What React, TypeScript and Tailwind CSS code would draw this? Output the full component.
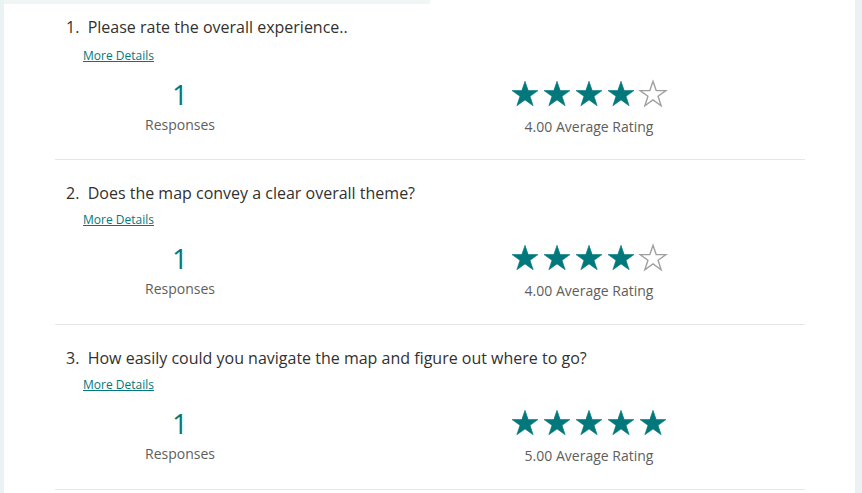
import React from 'react';

type Question = {
  title: string;
  responses: number;
  rating: number;
};

const questions: Question[] = [
  { title: 'Please rate the overall experience..', responses: 1, rating: 4 },
  { title: 'Does the map convey a clear overall theme?', responses: 1, rating: 4 },
  { title: 'How easily could you navigate the map and figure out where to go?', responses: 1, rating: 5 },
];

function Star({ filled }: { filled: boolean }) {
  return (
    <svg width="30" height="30" viewBox="0 0 24 24">
      <path
        d="M12 1.8l2.55 7.45h7.85l-6.35 4.6 2.45 7.55L12 16.7l-6.5 4.7 2.45-7.55L1.6 9.25h7.85z"
        fill={filled ? '#03787c' : 'none'}
        stroke={filled ? '#03787c' : '#a19f9d'}
        strokeWidth={filled ? 0.5 : 1.1}
        strokeLinejoin="miter"
      />
    </svg>
  );
}

function QuestionBlock({ q, index, first }: { q: Question; index: number; first: boolean }) {
  return (
    <div className={`${first ? 'pt-[11px] pb-[22px]' : 'pt-[21px] pb-[23px]'} border-b border-[#e6e6e6]`}>
      <div className="pl-[11px] text-[16px] leading-6 text-[#323130]">
        {index + 1}.&nbsp; {q.title}
      </div>
      <div className={`pl-[28px] text-[12px] leading-4 ${first ? 'mt-[9px]' : 'mt-[7px]'}`}>
        <a href="#" className="text-[#03787c] underline">
          More Details
        </a>
      </div>
      <div className="flex mt-[12px]">
        <div className="w-[250px] flex flex-col items-center">
          <div className="text-[28px] leading-9 text-[#03787c]">{q.responses}</div>
          <div className="text-[14px] leading-5 text-[#605e5c] mt-[3px]">Responses</div>
        </div>
        <div className="ml-[184px] w-[200px] flex flex-col items-center">
          <div className="flex gap-[2px] h-9 items-center">
            {[0, 1, 2, 3, 4].map((i) => (
              <Star key={i} filled={i < q.rating} />
            ))}
          </div>
          <div className="text-[14px] leading-5 text-[#605e5c] mt-[5px]">
            {q.rating.toFixed(2)} Average Rating
          </div>
        </div>
      </div>
    </div>
  );
}

export default function App() {
  return (
    <div
      className="w-[862px] h-[493px] overflow-hidden bg-[#eaf2f3] flex"
      style={{ fontFamily: '"Open Sans", "Noto Sans", sans-serif' }}
    >
      <div className="w-[4px] shrink-0" />
      <div className="w-[851px] flex flex-col">
        <div className="flex h-[4px] shrink-0">
          <div className="w-[426px] bg-[#f0f6f6]" />
          <div className="flex-1 bg-white" />
        </div>
        <div className="flex-1 bg-white">
          <div className="ml-[51px] w-[750px]">
            {questions.map((q, i) => (
              <QuestionBlock key={i} q={q} index={i} first={i === 0} />
            ))}
          </div>
        </div>
      </div>
      <div className="flex-1" />
    </div>
  );
}
